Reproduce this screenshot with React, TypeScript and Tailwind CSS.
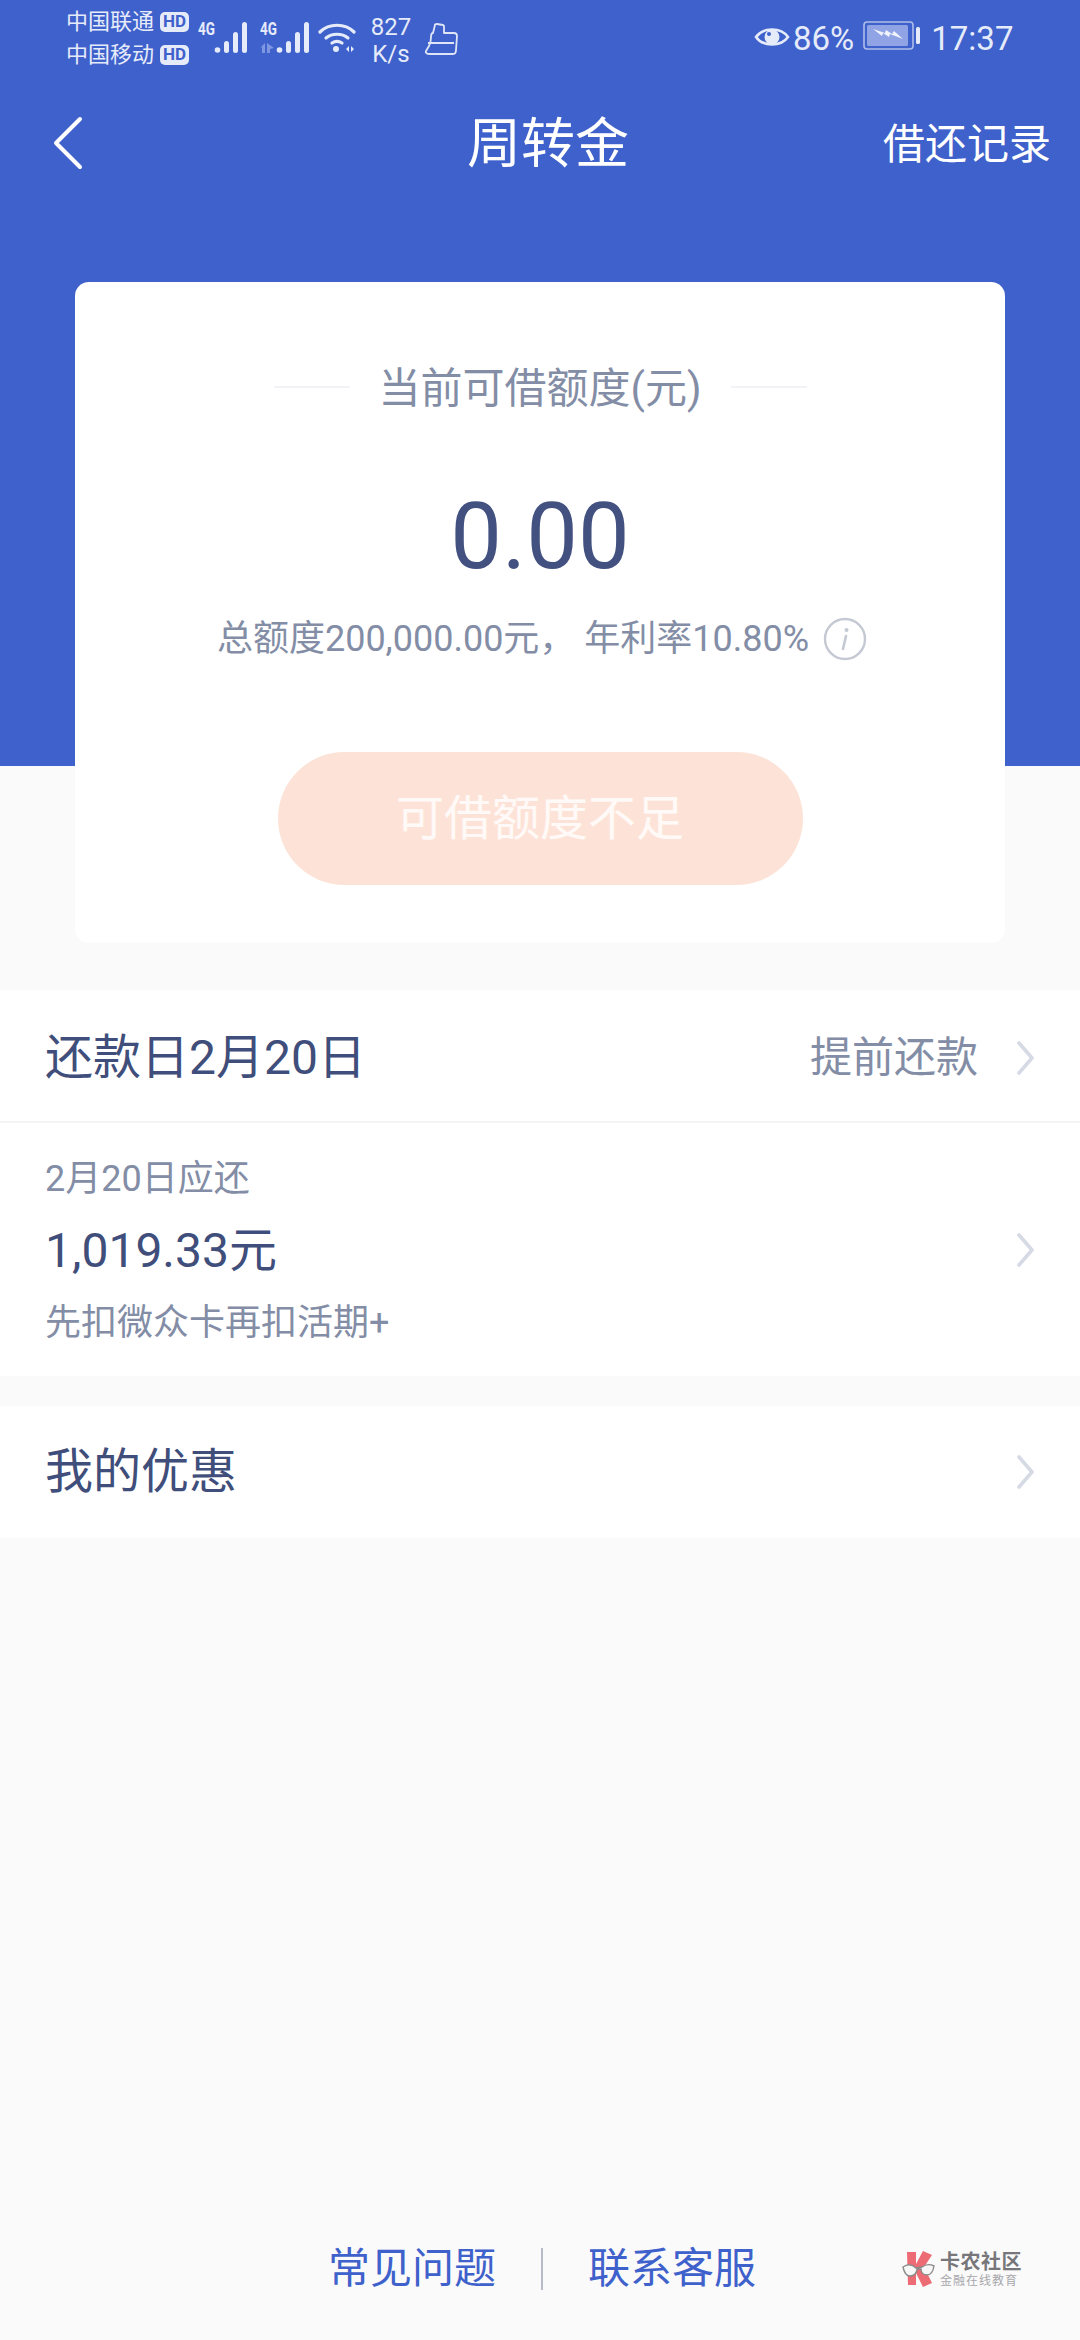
import React from "react";

function Signal({ withArrows }: { withArrows?: boolean }) {
  return (
    <svg width="54" height="36" viewBox="0 0 54 36" className="block">
      {withArrows ? (
        <g fill="#7f97e3">
          <path d="M7 24v10H4v-6l-2 1z" />
          <path d="M9 24l7 5-4 1v4H9z" />
        </g>
      ) : null}
      <g fill="#e6ebfa">
        <circle cx="21.5" cy="31" r="2.8" />
        <rect x="28" y="22" width="5" height="12" rx="2.5" />
        <rect x="37" y="13" width="5" height="21" rx="2.5" />
        <rect x="46" y="3" width="5" height="31" rx="2.5" />
      </g>
    </svg>
  );
}

function Chevron({ className }: { className?: string }) {
  return (
    <svg width="20" height="34" viewBox="0 0 20 34" className={className}>
      <path d="M3 2l13 15L3 32" fill="none" stroke="#d6dae5" strokeWidth="3.6" strokeLinecap="round" strokeLinejoin="round" />
    </svg>
  );
}

function Hd() {
  return (
    <span className="flex h-[20px] w-[29px] shrink-0 items-center justify-center rounded-[5px] bg-[#e6ebfa] text-[17px] leading-none font-bold text-[#3e61cb]">
      HD
    </span>
  );
}

export default function App() {
  return (
    <div className="flex h-[2340px] w-[1080px] flex-col overflow-hidden bg-[#fafafa] font-['Roboto','Noto_Sans_CJK_SC',sans-serif]">
      <header className="h-[282px] shrink-0 bg-[#3e61cb]">
        <div className="flex h-[72px] items-start pt-[11px] pl-[66px] text-[#e6ebfa]">
          <div className="flex w-[122px] flex-col gap-[12px]">
            <div className="flex items-center gap-[6px] text-[22px] leading-[21px] whitespace-nowrap">
              <span>中国联通</span>
              <Hd />
            </div>
            <div className="flex items-center gap-[6px] text-[22px] leading-[21px] whitespace-nowrap">
              <span>中国移动</span>
              <Hd />
            </div>
          </div>
          <div className="relative mt-[8px] ml-[8px] h-[36px] w-[54px]">
            <Signal />
            <span className="absolute top-0 left-[2px] origin-left scale-x-75 text-[18px] leading-[20px] font-bold">4G</span>
          </div>
          <div className="relative mt-[8px] ml-[8px] h-[36px] w-[54px]">
            <Signal withArrows />
            <span className="absolute top-0 left-[2px] origin-left scale-x-75 text-[18px] leading-[20px] font-bold">4G</span>
          </div>
          <svg width="38" height="32" viewBox="0 0 38 32" className="mt-[11px] ml-[6px]">
            <g fill="none" stroke="#e6ebfa" strokeWidth="3.2" strokeLinecap="round">
              <path d="M2 10C11 1 27 1 36 10" />
              <path d="M8 16c6-5 16-5 22 0" />
              <path d="M14 21c3-2 7-2 10 0" />
            </g>
            <circle cx="18" cy="27" r="3" fill="#e6ebfa" />
            <path d="M28 27l3-3v6zM33 24l3 3-3 3z" fill="#e6ebfa" />
          </svg>
          <div className="mt-[3px] ml-[15px] flex w-[40px] flex-col items-center text-[24px] leading-[27px] whitespace-nowrap">
            <span>827</span>
            <span>K/s</span>
          </div>
          <svg width="34" height="34" viewBox="0 0 34 34" className="mt-[11px] ml-[13px]">
            <path
              d="M9 11l2-8c0-1 1-1 2-1l6 1 1 1v7h10c2 0 3 1 3 3l-1 14c0 3-1 4-3 4H6c-3 0-5-1-4-3l3-5c1-2 2-5 2-9 0-3 1-4 2-4zM4 21h26"
              fill="none"
              stroke="#dfe5f7"
              strokeWidth="1.8"
              strokeLinejoin="round"
            />
          </svg>
          <svg width="36" height="28" viewBox="0 0 36 28" className="mt-[12px] ml-[296px]">
            <path d="M2 14C9 4 27 4 34 14 27 24 9 24 2 14z" fill="none" stroke="#e6ebfa" strokeWidth="2.6" />
            <circle cx="18" cy="14" r="7.5" fill="#e6ebfa" />
            <circle cx="15" cy="11" r="2" fill="#3e61cb" />
          </svg>
          <span className="mt-[9px] ml-[3px] text-[33px] leading-[38px]">86%</span>
          <svg width="58" height="30" viewBox="0 0 58 30" className="mt-[10px] ml-[9px]">
            <rect x="1" y="1" width="49" height="27" rx="3" fill="none" stroke="#aebdea" strokeWidth="1.6" />
            <rect x="4" y="4" width="41" height="21" rx="1.5" fill="#90a3e4" />
            <path d="M10 8l12 4 1-3 6 4 2-3 9 8-13-5-1 3-6-4-1 3z" fill="#f0f3fc" />
            <rect x="53" y="6" width="4" height="17" rx="1.5" fill="#e6ebfa" />
          </svg>
          <span className="mt-[9px] ml-[10px] text-[33px] leading-[38px]">17:37</span>
        </div>
        <nav className="flex h-[146px] items-center text-white">
          <svg width="32" height="54" viewBox="0 0 32 54" className="mb-[5px] ml-[52px]">
            <path d="M28 3L4 27l24 24" fill="none" stroke="#fff" strokeWidth="4" strokeLinecap="round" strokeLinejoin="round" />
          </svg>
          <h1 className="ml-[383px] text-[54px] leading-none font-normal">周转金</h1>
          <span className="mr-[29px] ml-auto text-[42px] leading-none">借还记录</span>
        </nav>
      </header>

      <div className="bg-[linear-gradient(#3e61cb_484px,transparent_484px)] px-[75px]">
        <section className="flex h-[661px] flex-col items-center rounded-[14px] bg-white">
          <div className="mt-[84px] flex items-center">
            <span className="mb-[5px] h-[2px] w-[76px] bg-[#f2f3f6]" />
            <span className="mx-[29px] text-[42px] leading-[46px] text-[#838da6]">当前可借额度(元)</span>
            <span className="mb-[5px] h-[2px] w-[76px] bg-[#f2f3f6]" />
          </div>
          <div className="mt-[70px] text-[92px] leading-[110px] text-[#435180]">0.00</div>
          <div className="mt-[24px] flex items-center pl-[4px] text-[36px] leading-[46px] text-[#838da6]">
            <span className="whitespace-pre">总额度200,000.00元， 年利率10.80%</span>
            <svg width="44" height="44" viewBox="0 0 44 44" className="ml-[14px]">
              <circle cx="22" cy="22" r="20" fill="none" stroke="#c5c9d4" strokeWidth="2.4" />
              <circle cx="23.5" cy="13" r="2" fill="#c5c9d4" />
              <path d="M23 19l-3 13" stroke="#c5c9d4" strokeWidth="2.6" strokeLinecap="round" />
            </svg>
          </div>
          <button className="mt-[90px] flex h-[133px] w-[525px] items-center justify-center rounded-full bg-[#fde3d7] text-[48px] text-white/80">
            可借额度不足
          </button>
        </section>
      </div>

      <section className="mt-[47px] bg-white">
        <div className="flex h-[133px] items-center justify-between border-b-2 border-[#f3f4f6] pt-[5px] pr-[44px] pl-[45px]">
          <span className="text-[48px] leading-none text-[#3f4e7a]">还款日2月20日</span>
          <div className="flex items-center gap-[38px]">
            <span className="text-[42px] leading-none text-[#838da6]">提前还款</span>
            <Chevron />
          </div>
        </div>
        <div className="flex h-[253px] items-center justify-between pr-[44px] pl-[45px]">
          <div className="flex flex-col pt-[2px]">
            <span className="text-[36px] leading-[42px] text-[#838da6]">2月20日应还</span>
            <span className="mt-[23px] text-[48px] leading-[56px] text-[#3f4e7a]">1,019.33元</span>
            <span className="mt-[23px] text-[36px] leading-[42px] text-[#838da6]">先扣微众卡再扣活期+</span>
          </div>
          <Chevron />
        </div>
      </section>

      <section className="mt-[30px] flex h-[132px] items-center justify-between bg-white pr-[44px] pl-[45px]">
        <span className="text-[48px] leading-none text-[#3f4e7a]">我的优惠</span>
        <Chevron />
      </section>

      <footer className="mt-auto mb-[46px] flex items-center pl-[328px]">
        <span className="text-[42px] leading-[50px] text-[#3e61cb]">常见问题</span>
        <span className="mx-[45px] h-[42px] w-[2px] bg-[#b6bac6]" />
        <span className="text-[42px] leading-[50px] text-[#3e61cb]">联系客服</span>
        <div className="ml-[146px] flex items-center gap-[4px]">
          <svg width="34" height="36" viewBox="0 0 34 36">
            <path d="M5 1h9v12l7-13 9 4-8 12 8 16-9 4-7-14v12H6z" fill="#ec6b75" />
            <path d="M1 16c4-3 9-3 13 1l6-1c4-3 8-3 12-1-1 6-3 9-7 9-4 0-6-3-6-6h-4c0 4-3 7-7 7-4 0-6-4-7-9z" fill="#f7f7f7" stroke="#8a8a8a" strokeWidth="1.4" />
          </svg>
          <div className="flex flex-col items-start">
            <span className="text-[20px] leading-[24px] font-bold tracking-[0.5px] whitespace-nowrap text-[#77777b]">卡农社区</span>
            <span className="text-[12px] leading-[14px] tracking-[1px] whitespace-nowrap text-[#a8a8ac]">金融在线教育</span>
          </div>
        </div>
      </footer>
    </div>
  );
}
